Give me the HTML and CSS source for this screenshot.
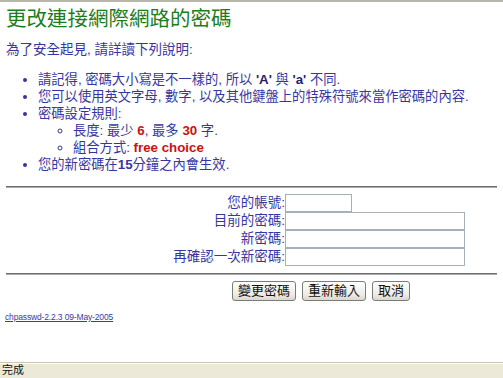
FILE: index.html
```html
<!DOCTYPE html>
<html lang="zh-Hant">
<head>
<meta charset="utf-8">
<title>更改連接網際網路的密碼</title>
<link rel="stylesheet" href="styles.css">
</head>
<body>
<div class="window">
  <div class="content">
    <h1 class="title">更改連接網際網路的密碼</h1>
    <p class="intro">為了安全起見, 請詳讀下列說明:</p>
    <ul class="rules">
      <li>請記得, 密碼大小寫是不一樣的, 所以 <b class="dark">'A'</b> 與 <b class="dark">'a'</b> 不同.</li>
      <li>您可以使用英文字母, 數字, 以及其他鍵盤上的特殊符號來當作密碼的內容.</li>
      <li>密碼設定規則:
        <ul class="sub">
          <li>長度: 最少 <b class="red">6</b>, 最多 <b class="red">30</b> 字.</li>
          <li>組合方式: <b class="red">free choice</b></li>
        </ul>
      </li>
      <li>您的新密碼在<b>15</b>分鐘之內會生效.</li>
    </ul>
    <hr class="rule">
    <form class="form">
      <label class="lbl" for="acct">您的帳號:</label><input id="acct" class="field short" type="text">
      <label class="lbl" for="old">目前的密碼:</label><input id="old" class="field" type="password">
      <label class="lbl" for="new1">新密碼:</label><input id="new1" class="field" type="password">
      <label class="lbl" for="new2">再確認一次新密碼:</label><input id="new2" class="field" type="password">
    </form>
    <hr class="rule rule2">
    <div class="buttons">
      <button class="btn" type="button">變更密碼</button>
      <button class="btn" type="button">重新輸入</button>
      <button class="btn" type="button">取消</button>
    </div>
    <a class="ver" href="#">chpasswd-2.2.3 09-May-2005</a>
  </div>
  <div class="status">完成</div>
</div>
</body>
</html>
```
FILE: styles.css
```css
html, body {
  margin: 0;
  padding: 0;
  background: #fff;
}
body {
  font-family: "Liberation Sans", "Noto Sans CJK TC", sans-serif;
  color: #3636a2;
}
.window {
  height: 378px;
  box-sizing: border-box;
  border-top: 2px solid #b9b6ab;
  display: flex;
  flex-direction: column;
  overflow: hidden;
}
.content {
  flex: 1;
  padding: 0 6px;
}
.title {
  margin: 5px 0 0;
  font-size: 20.5px;
  line-height: 24px;
  font-weight: normal;
  color: #1d7d1d;
}
.intro {
  margin: 10px 0 0;
  font-size: 13.5px;
  line-height: 17px;
}
.rules {
  margin: 13px 0 0;
  padding-left: 32px;
  font-size: 13.3px;
  line-height: 17px;
  list-style: disc;
}
.sub {
  margin: 0;
  padding-left: 35px;
  list-style: circle;
}
.rules b { font-weight: bold; }
.dark { color: #1f1f6a; }
.red { color: #cc1111; }
.rule {
  margin: 13px 0 0;
  height: 0;
  border: 0;
  border-top: 1px solid #6f6f6f;
  border-bottom: 1px solid #a9a9a9;
}
.form {
  margin: 6px 0 0;
  display: grid;
  grid-template-columns: 279px auto;
  grid-auto-rows: 18px;
  justify-content: start;
  align-items: center;
  font-size: 13.5px;
}
.lbl {
  text-align: right;
  white-space: nowrap;
  line-height: 18px;
}
.field {
  box-sizing: border-box;
  width: 180px;
  height: 18px;
  margin: 0;
  padding: 0 2px;
  border: 1px solid #a5b0b8;
  background: #fff;
}
.field.short { width: 67px; }
.rule2 { margin-top: 7px; }
.buttons {
  margin: 6px 0 0 226px;
  display: flex;
  gap: 6px;
}
.btn {
  height: 20px;
  padding: 0 5px;
  font-family: "Liberation Sans", "Noto Sans CJK TC", sans-serif;
  font-size: 13px;
  line-height: 18px;
  color: #111;
  background: linear-gradient(#ffffff, #ecebe6 70%, #d9d7ce);
  border: 1px solid #7d7d78;
  border-radius: 3px;
}
.ver {
  display: inline-block;
  margin: 10px 0 0 -1px;
  font-size: 8.5px;
  letter-spacing: -0.15px;
  line-height: 12px;
  color: #3a3aa8;
  text-decoration: underline;
}
.status {
  height: 16px;
  box-sizing: border-box;
  background: #ece9d8;
  border-top: 1px solid #c9c6b8;
  box-shadow: inset 0 1px 0 #fffdf5;
  padding-left: 2px;
  font-size: 11px;
  line-height: 15px;
  color: #111;
}
```
